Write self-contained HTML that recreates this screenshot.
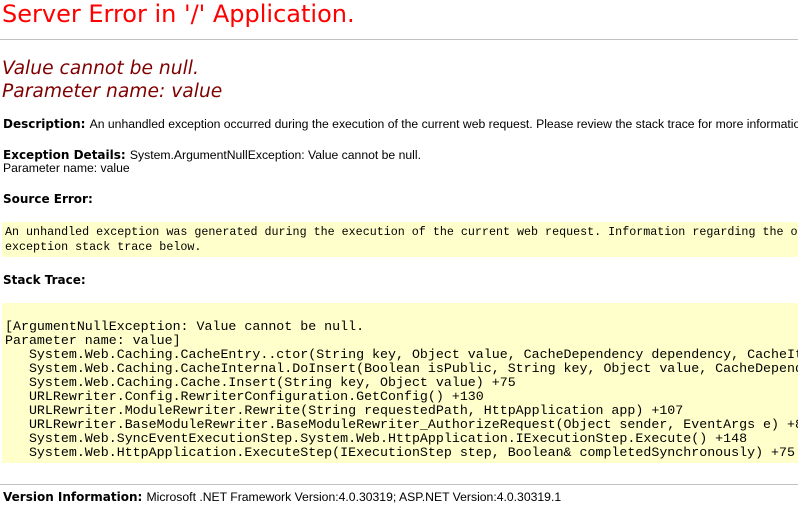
<!DOCTYPE html>
<html><head><meta charset="utf-8"><style>
body{margin:0;width:798px;height:519px;overflow:hidden;background:#fff;position:relative;font-family:"Liberation Sans",Arial,sans-serif;color:#000}
.a{position:absolute;white-space:pre;}
.t{left:2px;top:0px;font-family:"DejaVu Sans",sans-serif;font-size:24px;color:#f00;line-height:28px}
.hr{position:absolute;left:0;width:798px;height:1px;background:#c0c0c0}
.i{left:2px;font-family:"DejaVu Sans",sans-serif;font-size:18.7px;font-style:italic;color:#800000;line-height:23px}
.s{font-size:12.2px;line-height:13px;left:3px}
.b{font-weight:bold;font-family:"DejaVu Sans",sans-serif;font-size:12px}
.box{position:absolute;left:2px;width:800px;background:#ffffcc}
.m1{font-family:"Liberation Mono",monospace;font-size:11.7px;line-height:15px;left:5px}
.m2{font-family:"Liberation Mono",monospace;font-size:13.3px;line-height:14px;left:5px}
</style></head><body>
<div class="a t">Server Error in '/' Application.</div>
<div class="hr" style="top:39px"></div>
<div class="a i" style="top:57px">Value cannot be null.
Parameter name: value</div>
<div class="a s" style="top:118px"><span class="b">Description: </span>An unhandled exception occurred during the execution of the current web request. Please review the stack trace for more information about the error and where it originated in the code.</div>
<div class="a s" style="top:149px"><span class="b">Exception Details: </span>System.ArgumentNullException: Value cannot be null.
Parameter name: value</div>
<div class="a s" style="top:193px"><span class="b">Source Error:</span></div>
<div class="box" style="top:222px;height:35px"></div>
<div class="a m1" style="top:225px">An unhandled exception was generated during the execution of the current web request. Information regarding the origin
exception stack trace below.</div>
<div class="a s" style="top:274px"><span class="b">Stack Trace:</span></div>
<div class="box" style="top:303px;height:160px"></div>
<div class="a m2" style="top:320px">[ArgumentNullException: Value cannot be null.
Parameter name: value]
   System.Web.Caching.CacheEntry..ctor(String key, Object value, CacheDependency dependency, CacheItemRemovedCallback
   System.Web.Caching.CacheInternal.DoInsert(Boolean isPublic, String key, Object value, CacheDependency dependency
   System.Web.Caching.Cache.Insert(String key, Object value) +75
   URLRewriter.Config.RewriterConfiguration.GetConfig() +130
   URLRewriter.ModuleRewriter.Rewrite(String requestedPath, HttpApplication app) +107
   URLRewriter.BaseModuleRewriter.BaseModuleRewriter_AuthorizeRequest(Object sender, EventArgs e) +80
   System.Web.SyncEventExecutionStep.System.Web.HttpApplication.IExecutionStep.Execute() +148
   System.Web.HttpApplication.ExecuteStep(IExecutionStep step, Boolean&amp; completedSynchronously) +75</div>
<div class="hr" style="top:484px"></div>
<div class="a s" style="top:491px"><span class="b">Version Information: </span>Microsoft .NET Framework Version:4.0.30319; ASP.NET Version:4.0.30319.1</div>
</body></html>
